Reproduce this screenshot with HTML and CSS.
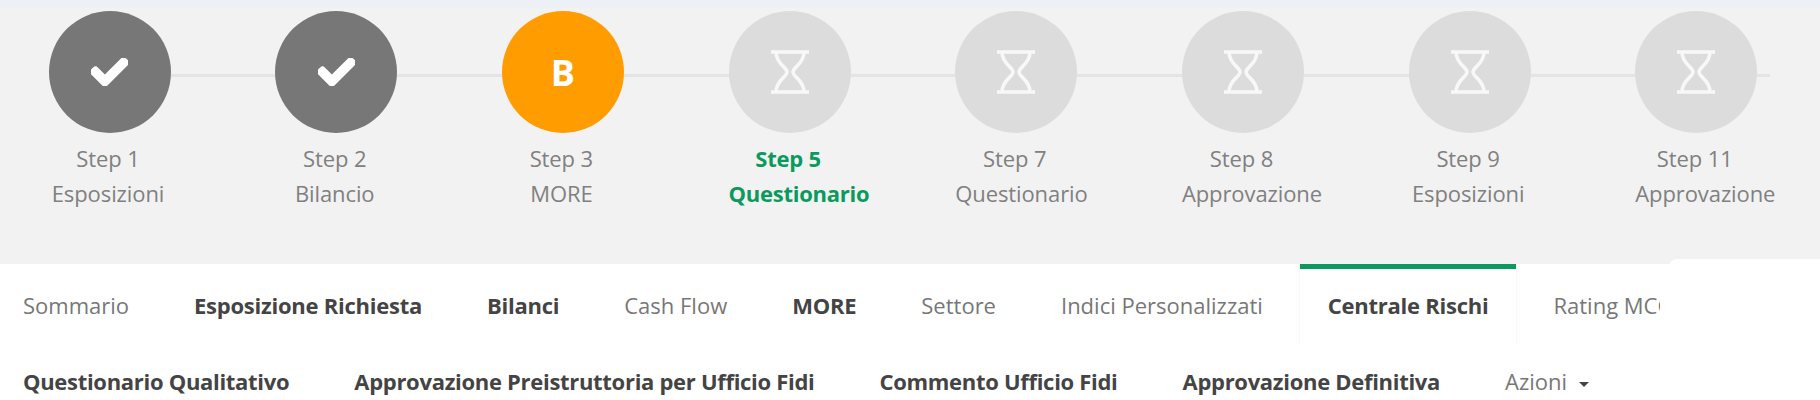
FILE: index.html
```html
<!DOCTYPE html>
<html lang="en">
<head>
  <meta charset="UTF-8">
  <title>Pratica</title>
  <link rel="stylesheet" href="styles.css">
</head>
<body>
  <svg class="icon-defs" aria-hidden="true">
    <symbol id="icon-check" viewBox="0 65 512 382">
      <path d="M173.898 439.404l-166.4-166.4c-9.997-9.997-9.997-26.206 0-36.204l36.203-36.204c9.997-9.998 26.207-9.998 36.204 0L192 312.69 432.095 72.596c9.997-9.997 26.207-9.997 36.204 0l36.203 36.204c9.997 9.997 9.997 26.206 0 36.204l-294.4 294.401c-9.998 9.997-26.207 9.997-36.204-.001z"/>
    </symbol>
    <symbol id="icon-hourglass" viewBox="0 0 38 44">
      <path d="M0 2H38M0 42H38M5 2C5 14 16 17 16 22C16 27 5 30 5 42M33 2C33 14 22 17 22 22C22 27 33 30 33 42"/>
    </symbol>
  </svg>

  <div class="stepper-wrap">
    <ol class="stepper">
      <li class="step">
        <div class="step-head">
          <span class="circle done"><svg class="check"><use href="#icon-check"/></svg></span>
          <span class="connector"></span>
        </div>
        <div class="step-label">Step 1<br>Esposizioni</div>
      </li>
      <li class="step">
        <div class="step-head">
          <span class="circle done"><svg class="check"><use href="#icon-check"/></svg></span>
          <span class="connector"></span>
        </div>
        <div class="step-label">Step 2<br>Bilancio</div>
      </li>
      <li class="step">
        <div class="step-head">
          <span class="circle warn">B</span>
          <span class="connector"></span>
        </div>
        <div class="step-label">Step 3<br>MORE</div>
      </li>
      <li class="step">
        <div class="step-head">
          <span class="circle pending"><svg class="hourglass"><use href="#icon-hourglass"/></svg></span>
          <span class="connector"></span>
        </div>
        <div class="step-label current">Step 5<br>Questionario</div>
      </li>
      <li class="step">
        <div class="step-head">
          <span class="circle pending"><svg class="hourglass"><use href="#icon-hourglass"/></svg></span>
          <span class="connector"></span>
        </div>
        <div class="step-label">Step 7<br>Questionario</div>
      </li>
      <li class="step">
        <div class="step-head">
          <span class="circle pending"><svg class="hourglass"><use href="#icon-hourglass"/></svg></span>
          <span class="connector"></span>
        </div>
        <div class="step-label">Step 8<br>Approvazione</div>
      </li>
      <li class="step">
        <div class="step-head">
          <span class="circle pending"><svg class="hourglass"><use href="#icon-hourglass"/></svg></span>
          <span class="connector"></span>
        </div>
        <div class="step-label">Step 9<br>Esposizioni</div>
      </li>
      <li class="step last">
        <div class="step-head">
          <span class="circle pending"><svg class="hourglass"><use href="#icon-hourglass"/></svg></span>
          <span class="connector"></span>
        </div>
        <div class="step-label">Step 11<br>Approvazione</div>
      </li>
    </ol>
  </div>

  <nav class="tabs-top">
    <div class="tabs-scroll">
      <a class="tab">Sommario</a>
      <a class="tab strong">Esposizione Richiesta</a>
      <a class="tab strong">Bilanci</a>
      <a class="tab">Cash Flow</a>
      <a class="tab strong">MORE</a>
      <a class="tab">Settore</a>
      <a class="tab">Indici Personalizzati</a>
      <a class="tab strong active">Centrale Rischi</a>
      <a class="tab">Rating MCC</a>
    </div>
    <div class="tabs-corner"></div>
  </nav>
  <nav class="tabs-bottom">
    <a class="tab strong">Questionario Qualitativo</a>
    <a class="tab strong">Approvazione Preistruttoria per Ufficio Fidi</a>
    <a class="tab strong">Commento Ufficio Fidi</a>
    <a class="tab strong">Approvazione Definitiva</a>
    <a class="tab">Azioni <span class="caret"></span></a>
  </nav>
</body>
</html>
```

FILE: styles.css
```css
html { overflow: hidden; }
body {
  margin: 0;
  height: 400px;
  overflow: hidden;
  background: #fff;
  font-family: 'Open Sans', 'Noto Sans', sans-serif;
  font-size: 22px;
  color: #808080;
}
.icon-defs { display: none; }

.stepper-wrap {
  height: 256px;
  border-top: 8px solid #eef0f7;
  background: #f2f2f2;
}
.stepper {
  display: flex;
  margin: 0;
  padding: 3px 0 0 48.5px;
  list-style: none;
}
.step { width: 226.7px; flex: none; }
.step.last { width: 135px; }
.step-head { display: flex; }
.circle {
  flex: none;
  width: 122px;
  height: 122px;
  border-radius: 50%;
  display: flex;
  align-items: center;
  justify-content: center;
}
.done { background: #777; }
.warn {
  background: #ff9c00;
  color: #fff;
  font-size: 36px;
  font-weight: 700;
  padding-top: 1px;
  box-sizing: border-box;
}
.pending { background: #dcdcdc; }
.connector {
  flex: 1;
  height: 3px;
  margin-top: 63px;
  background: #e4e4e4;
}
.check {
  width: 37px;
  height: 28px;
  fill: #fff;
  stroke: #fff;
  stroke-width: 30;
  stroke-linejoin: round;
  overflow: visible;
}
.hourglass {
  width: 38px;
  height: 44px;
  fill: none;
  stroke: #f8f8f8;
  stroke-width: 3.5;
}

.step-label {
  width: 119px;
  margin-top: 8px;
  line-height: 35px;
  letter-spacing: -0.1px;
  text-align: center;
  white-space: nowrap;
}
.step-label.current { color: #0b9a5d; font-weight: 700; letter-spacing: -0.25px; }

.tabs-top { display: flex; margin-left: -5px; height: 81px; }
.tabs-scroll {
  display: flex;
  flex: none;
  gap: 9px;
  width: 1665px;
  overflow: hidden;
}
.tabs-corner {
  flex: 1;
  margin: -5px 0 0 9px;
  height: 20px;
  background: #fff;
  border-top-left-radius: 8px;
}
.tabs-bottom {
  display: flex;
  gap: 9px;
  margin-left: -5px;
  height: 55px;
  padding-top: 20px;
  box-sizing: border-box;
}

.tab {
  flex: none;
  padding: 0 28px;
  line-height: 32px;
  white-space: nowrap;
  color: #777;
}
.tabs-top .tab {
  border-top: 5px solid transparent;
  height: 76px;
  line-height: 72px;
}
.tab.strong { color: #444; font-weight: 700; letter-spacing: -0.25px; }
.tabs-bottom .tab.strong { letter-spacing: -0.3px; }
.tabs-top .tab.active {
  border-top-color: #0b9a5d;
  box-shadow: 1px 0 0 #f8f8f8, -1px 0 0 #f8f8f8;
}
.caret {
  display: inline-block;
  width: 0;
  height: 0;
  margin-left: 6px;
  vertical-align: middle;
  border-top: 5px solid #444;
  border-left: 5px solid transparent;
  border-right: 5px solid transparent;
}
```
